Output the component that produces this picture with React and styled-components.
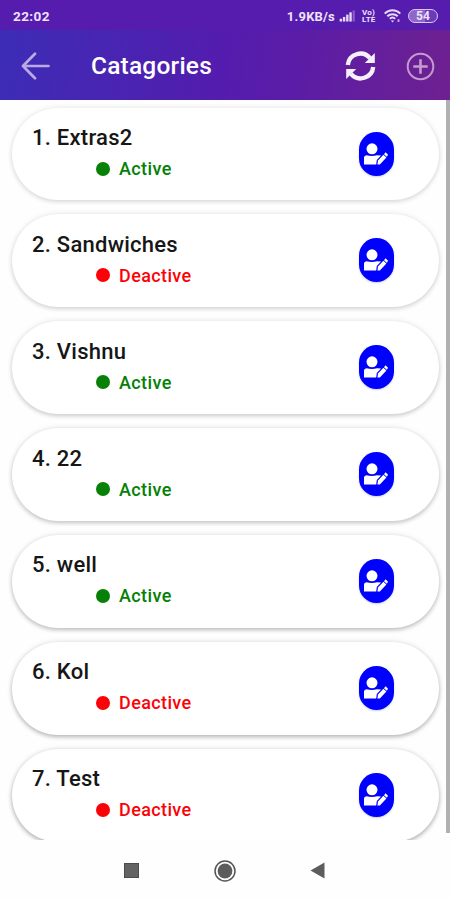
import React from 'react';
import styled, { createGlobalStyle } from 'styled-components';

const GlobalStyle = createGlobalStyle`
  * {
    box-sizing: border-box;
  }
  body {
    margin: 0;
    background: #fefefe;
    font-family: Roboto, sans-serif;
  }
  svg {
    display: block;
    flex-shrink: 0;
  }
`;

const Screen = styled.div`
  width: 450px;
  height: 900px;
  display: flex;
  flex-direction: column;
  overflow: hidden;
`;

const StatusBar = styled.div`
  height: 30px;
  flex-shrink: 0;
  display: flex;
  align-items: center;
  padding: 2px 12px 0 13px;
  background: #561cad;
  color: #eee3fb;
`;

const Clock = styled.span`
  flex: 1;
  font-size: 13.5px;
  font-weight: 700;
  letter-spacing: 0.4px;
`;

const Speed = styled.span`
  margin-right: 4px;
  font-size: 13px;
  font-weight: 700;
  letter-spacing: 0.2px;
`;

const VoLte = styled.span`
  width: 16px;
  margin: 0 6px 0 6px;
  font-size: 8px;
  line-height: 7.5px;
  font-weight: 700;
  letter-spacing: 0.2px;
`;

const Battery = styled.span`
  display: flex;
  align-items: center;
  justify-content: center;
  width: 30px;
  height: 14px;
  margin-left: 7px;
  border: 1.5px solid #d9c6f0;
  border-radius: 7px;
  background: linear-gradient(90deg, #8d68c8 58%, #6a3bb8 58%);
  font-size: 12px;
  line-height: 11px;
  font-weight: 700;
`;

const Header = styled.header`
  height: 70px;
  flex-shrink: 0;
  display: flex;
  align-items: center;
  padding: 2px 15px 0 21px;
  background: linear-gradient(97deg, #3c2db6 0%, #541cae 50%, #5c1da5 68%, #6e2190 100%);
`;

const Heading = styled.h1`
  flex: 1;
  margin: 0 0 0 41px;
  color: #fff;
  font-size: 24.5px;
  line-height: 30px;
  font-weight: 500;
  letter-spacing: 0.2px;
`;

const Content = styled.main`
  height: 740px;
  flex-shrink: 0;
  display: flex;
  align-items: flex-start;
  overflow: hidden;
`;

const List = styled.ul`
  flex: 1;
  height: 100%;
  margin: 0;
  padding: 7.6px 7px 0 12px;
  display: flex;
  flex-direction: column;
  gap: 14px;
  list-style: none;
  overflow: hidden;
`;

const ScrollThumb = styled.div`
  width: 4.5px;
  height: 733px;
  background: #b1b1b3;
`;

const Card = styled.li`
  height: 92.85px;
  flex-shrink: 0;
  display: flex;
  align-items: center;
  padding: 0 45px 0 20px;
  border-radius: 46.5px;
  background: #fff;
  box-shadow: 0 2px 4px rgba(0, 0, 0, ${props => props.$shade}), 0 0 6px rgba(0, 0, 0, 0.09);
`;

const CardText = styled.div`
  flex: 1;
  height: 100%;
  padding-top: 14.5px;
`;

const Name = styled.div`
  height: 31px;
  color: #161616;
  font-size: 22px;
  line-height: 31px;
  font-weight: 500;
  letter-spacing: 0.25px;
`;

const Status = styled.div`
  height: 31px;
  display: flex;
  align-items: center;
  gap: 9px;
  margin-left: 64px;
  color: ${props => (props.$active ? '#068006' : '#fb0208')};
  font-size: 18px;
  font-weight: 500;
  letter-spacing: 0.38px;
  &::before {
    content: '';
    width: 14px;
    height: 14px;
    border-radius: 50%;
    background: currentColor;
  }
`;

const EditButton = styled.button`
  width: 35px;
  height: 44px;
  margin-bottom: 1px;
  padding: 0;
  border: 0;
  border-radius: 17.5px;
  display: flex;
  align-items: center;
  justify-content: center;
  background: #0000fe;
  box-shadow: 0 1px 2px rgba(0, 0, 160, 0.2);
`;

const NavBar = styled.nav`
  flex: 1;
  display: flex;
  align-items: center;
  justify-content: space-between;
  padding: 1px 125px 0 124px;
  background: #fefefe;
`;

const categories = [
  { name: 'Extras2', active: true },
  { name: 'Sandwiches', active: false },
  { name: 'Vishnu', active: true },
  { name: '22', active: true },
  { name: 'well', active: true },
  { name: 'Kol', active: false },
  { name: 'Test', active: false },
];

const SignalIcon = () => (
  <svg width="17" height="12" viewBox="0 0 17 13" fill="#e6d8f7">
    <rect x="0" y="9.5" width="2.6" height="3" />
    <rect x="3.5" y="7.5" width="2.6" height="5" />
    <rect x="7" y="5" width="2.6" height="7.5" />
    <rect x="10.5" y="2.5" width="2.6" height="10" />
    <rect x="14" y="0.5" width="2.4" height="12" opacity="0.35" />
  </svg>
);

const WifiIcon = () => (
  <svg width="17" height="14" viewBox="0 0 17 14" fill="none" stroke="#e6d8f7" strokeWidth="2">
    <path d="M0.7 4.6 C5 0.2 12 0.2 16.3 4.6" />
    <path d="M3.3 7.3 C6.2 4.4 10.8 4.4 13.7 7.3" />
    <path d="M5.8 9.8 C7.4 8.3 9.6 8.3 11.2 9.8" />
    <path d="M8.5 13.4 L6.8 11.5 H10.2 Z" fill="#e6d8f7" stroke="none" />
    <path d="M14.5 10.2 V13" strokeWidth="2" opacity="0.7" />
  </svg>
);

const BackIcon = () => (
  <svg width="29" height="28" viewBox="0 0 29 28" fill="none" stroke="#bcaae6" strokeWidth="2.7" strokeLinecap="round" strokeLinejoin="round">
    <path d="M14 1.8 L2 14 L14 26.2 M2 14 H27.5" />
  </svg>
);

const RefreshIcon = () => (
  <svg width="31" height="30" viewBox="0 0 31 30">
    <g fill="none" stroke="#f6effc" strokeWidth="4.4">
      <path d="M2.8 14 A12.6 12.6 0 0 1 25 7.2" />
      <path d="M28.2 16 A12.6 12.6 0 0 1 6 22.8" />
    </g>
    <path d="M29.8 2 V12 H19.8 Z" fill="#f6effc" />
    <path d="M1.2 28 V18 H11.2 Z" fill="#f6effc" />
  </svg>
);

const AddIcon = () => (
  <svg width="29" height="29" viewBox="0 0 29 29" fill="none" stroke="#c49bcf">
    <circle cx="14.5" cy="14.5" r="12.8" strokeWidth="2" />
    <path d="M14.5 7.3 V21.7 M7.3 14.5 H21.7" strokeWidth="2.6" />
  </svg>
);

const UserEditIcon = () => (
  <svg width="24" height="22" viewBox="0 0 24 22" fill="#fff">
    <circle cx="8" cy="5.8" r="5.5" />
    <path d="M0 21.5 V14.5 Q0 12.5 2.5 12.3 Q8 13.8 13 12.3 Q15.4 12.3 17 12.6 L12.8 17 L12.2 21.5 Z" />
    <path d="M13.4 21.5 L14 17.6 L19.4 11.8 L22.4 14.6 L16.8 20.6 L15.8 21.5 Z" />
    <path d="M20 11.2 L21.6 9.2 L24 11.8 L22.9 13.8 Z" />
  </svg>
);

const RefreshSlot = styled.div`
  margin-right: 30px;
`;

const App = () => (
  <Screen>
    <GlobalStyle />
    <StatusBar>
      <Clock>22:02</Clock>
      <Speed>1.9KB/s</Speed>
      <SignalIcon />
      <VoLte>Vo) LTE</VoLte>
      <WifiIcon />
      <Battery>54</Battery>
    </StatusBar>
    <Header>
      <BackIcon />
      <Heading>Catagories</Heading>
      <RefreshSlot>
        <RefreshIcon />
      </RefreshSlot>
      <AddIcon />
    </Header>
    <Content>
      <List>
        {categories.map((category, i) => (
          <Card key={category.name} $shade={0.1 + i * 0.03}>
            <CardText>
              <Name>{i + 1}. {category.name}</Name>
              <Status $active={category.active}>{category.active ? 'Active' : 'Deactive'}</Status>
            </CardText>
            <EditButton aria-label="Edit">
              <UserEditIcon />
            </EditButton>
          </Card>
        ))}
      </List>
      <ScrollThumb />
    </Content>
    <NavBar>
      <svg width="15" height="15" viewBox="0 0 15 15">
        <rect x="0.5" y="0.5" width="14" height="14" fill="#636363" stroke="#4c4c4c" />
      </svg>
      <svg width="22" height="22" viewBox="0 0 22 22">
        <circle cx="11" cy="11" r="10" fill="none" stroke="#555" strokeWidth="1.5" />
        <circle cx="11" cy="11" r="7.4" fill="#5c5c5c" />
      </svg>
      <svg width="15" height="17" viewBox="0 0 15 17">
        <path d="M0.5 8.5 L14.5 0.5 V16.5 Z" fill="#5c5c5c" />
      </svg>
    </NavBar>
  </Screen>
);

export default App;
